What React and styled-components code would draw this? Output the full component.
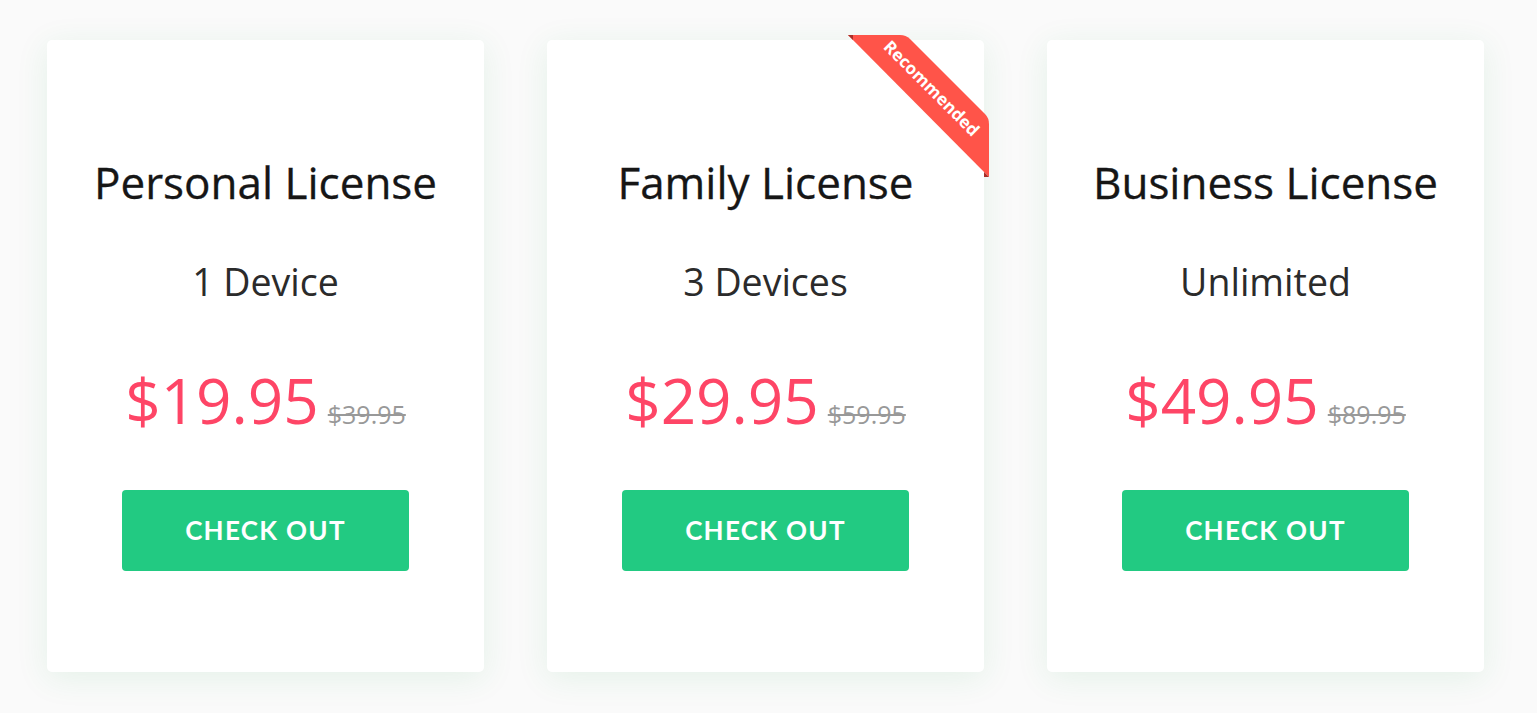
import React from "react";
import styled, { createGlobalStyle } from "styled-components";

const Global = createGlobalStyle`
  html, body { margin: 0; padding: 0; background: #fafafa; }
  body { font-family: "Open Sans", "Noto Sans", sans-serif; }
`;

const Page = styled.div`
  display: flex;
  gap: 63px;
  padding: 40px 0 0 47px;
  height: 713px;
  box-sizing: border-box;
  overflow: hidden;
`;

const Card = styled.div`
  position: relative;
  width: 437px;
  height: 632px;
  background: #fff;
  border-radius: 5px;
  box-shadow: 0 6px 32px rgba(40, 170, 80, 0.1);
  display: flex;
  flex-direction: column;
  align-items: center;
  padding-top: 120px;
  box-sizing: border-box;
`;

const Title = styled.h2`
  margin: 0;
  font-size: 44px;
  line-height: 1;
  font-weight: 400;
  color: #161616;
  height: 44px;
  -webkit-text-stroke: 0.3px #161616;
`;

const Devices = styled.div`
  margin-top: 59px;
  font-size: 37.5px;
  line-height: 1;
  color: #2b2b2b;
`;

const PriceRow = styled.div`
  margin-top: 68px;
  display: flex;
  align-items: baseline;
  gap: 9px;
`;

const Price = styled.span`
  font-size: 62px;
  line-height: 1;
  color: #fe4566;
`;

const OldPrice = styled.s`
  font-size: 25px;
  color: #999;
`;

const Button = styled.button`
  margin-top: 59px;
  width: 287px;
  height: 81px;
  border: none;
  border-radius: 4px;
  background: #22ca82;
  color: #fff;
  font-family: "Lato", "Open Sans", sans-serif;
  font-weight: 700;
  font-size: 26px;
  letter-spacing: 1.3px;
  cursor: pointer;
`;

const Ribbon = styled.div`
  position: absolute;
  top: -5px;
  right: -5px;
  width: 141px;
  height: 142px;
  pointer-events: none;
`;

const RibbonShape = styled.svg`
  position: absolute;
  inset: 0;
`;

const RibbonText = styled.span`
  position: absolute;
  left: 84px;
  top: 53px;
  transform: translate(-50%, -50%) rotate(45deg);
  font-family: "Open Sans", sans-serif;
  font-weight: 700;
  font-size: 17px;
  color: #fff;
  white-space: nowrap;
  line-height: 1;
`;

const plans = [
  { title: "Personal License", devices: "1 Device", price: "$19.95", old: "$39.95" },
  { title: "Family License", devices: "3 Devices", price: "$29.95", old: "$59.95", recommended: true },
  { title: "Business License", devices: "Unlimited", price: "$49.95", old: "$89.95" },
];

export default function App() {
  return (
    <>
      <Global />
      <Page>
        {plans.map((p) => (
          <Card key={p.title}>
            <Title>{p.title}</Title>
            <Devices>{p.devices}</Devices>
            <PriceRow>
              <Price>{p.price}</Price>
              <OldPrice>{p.old}</OldPrice>
            </PriceRow>
            <Button>CHECK OUT</Button>
            {p.recommended && (
              <Ribbon>
                <RibbonShape width="141" height="142" viewBox="0 0 141 142">
                  <path
                    d="M0 0 H52 Q58 0 62 4 L137 79 Q141 83 141 89 V142 Z"
                    fill="#ff5449"
                  />
                  <path d="M0 0 L5 5 L5 0 Z" fill="#a8302a" />
                  <path d="M136 137 L141 142 L136 142 Z" fill="#a8302a" />
                </RibbonShape>
                <RibbonText>Recommended</RibbonText>
              </Ribbon>
            )}
          </Card>
        ))}
      </Page>
    </>
  );
}
